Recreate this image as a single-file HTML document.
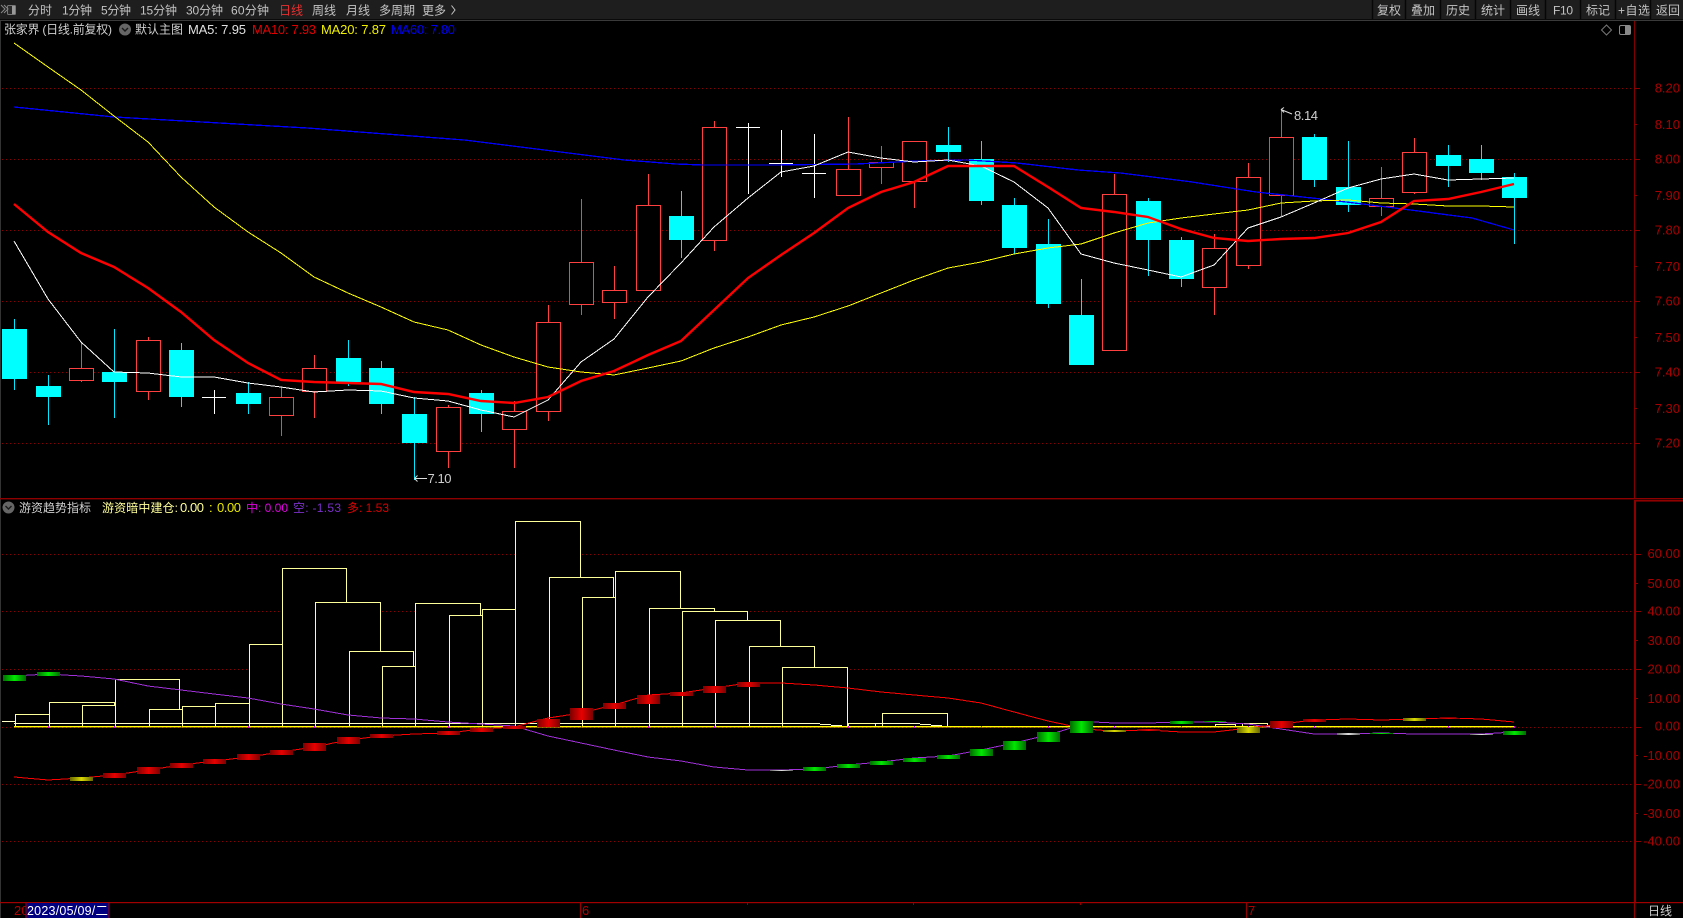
<!DOCTYPE html>
<html lang="zh">
<head>
<meta charset="utf-8">
<title>张家界</title>
<style>
html,body{margin:0;padding:0;background:#000;width:1683px;height:918px;overflow:hidden}
svg{display:block}
text{font-family:"Liberation Sans","Noto Sans CJK SC",sans-serif;white-space:pre}
.tb{font-size:12px;fill:#c4c4c4}
.ax{font-size:13px;fill:#a80000;text-anchor:end}
</style>
</head>
<body>
<svg width="1683" height="918" viewBox="0 0 1683 918" xmlns="http://www.w3.org/2000/svg">
<defs>
<linearGradient id="g"><stop offset="0" stop-color="#006c00"/><stop offset=".5" stop-color="#00e800"/><stop offset="1" stop-color="#006c00"/></linearGradient>
<linearGradient id="r"><stop offset="0" stop-color="#7c0000"/><stop offset=".5" stop-color="#e80000"/><stop offset="1" stop-color="#7c0000"/></linearGradient>
<linearGradient id="y"><stop offset="0" stop-color="#666600"/><stop offset=".5" stop-color="#d8d800"/><stop offset="1" stop-color="#666600"/></linearGradient>
<linearGradient id="w"><stop offset="0" stop-color="#666"/><stop offset=".5" stop-color="#e0e0e0"/><stop offset="1" stop-color="#666"/></linearGradient>
</defs>
<rect width="1683" height="918" fill="#000"/>

<!-- toolbar -->
<rect width="1683" height="19" fill="#1e1e1f"/>
<rect y="19" width="1683" height="1" fill="#0a0a0a"/>
<rect y="20" width="1683" height="1" fill="#3a3a3a"/>
<path d="M1372.5 0V19M1405.5 0V19M1440.5 0V19M1475.5 0V19M1510.5 0V19M1545.5 0V19M1580.5 0V19M1615.5 0V19M1650.5 0V19" stroke="#060606" stroke-width="1.5" fill="none"/>
<rect x="7.5" y="5.5" width="8" height="9" rx="1" fill="#2a2a2a" stroke="#777"/>
<rect x="12" y="6" width="3" height="8" fill="#999"/>
<path d="M1 5l4 4-4 4M4 5l4 4-4 4" stroke="#888" fill="none"/>
<text class="tb" x="28" y="14.5" textLength="24">分时</text>
<text class="tb" x="62" y="14.5" textLength="30">1分钟</text>
<text class="tb" x="101" y="14.5" textLength="30">5分钟</text>
<text class="tb" x="140" y="14.5" textLength="37">15分钟</text>
<text class="tb" x="186" y="14.5" textLength="37">30分钟</text>
<text class="tb" x="231" y="14.5" textLength="38">60分钟</text>
<text class="tb" x="279" y="14.5" style="fill:#e83030" textLength="24">日线</text>
<text class="tb" x="312" y="14.5" textLength="24">周线</text>
<text class="tb" x="346" y="14.5" textLength="24">月线</text>
<text class="tb" x="379" y="14.5" textLength="36">多周期</text>
<text class="tb" x="422" y="14.5" textLength="24">更多</text>
<path d="M451.5 5.5l3.5 4.5-3.5 4.5" stroke="#c4c4c4" fill="none"/>
<text class="tb" x="1377" y="14.5" textLength="24">复权</text>
<text class="tb" x="1411" y="14.5" textLength="24">叠加</text>
<text class="tb" x="1446" y="14.5" textLength="24">历史</text>
<text class="tb" x="1481" y="14.5" textLength="24">统计</text>
<text class="tb" x="1516" y="14.5" textLength="24">画线</text>
<text class="tb" x="1553" y="14.5" textLength="20">F10</text>
<text class="tb" x="1586" y="14.5" textLength="24">标记</text>
<text class="tb" x="1618" y="14.5" textLength="32">+自选</text>
<text class="tb" x="1656" y="14.5" textLength="24">返回</text>

<rect y="21" width="1" height="897" fill="#333"/>

<!-- grids -->
<path d="M2 88.5H1631M2 159.5H1631M2 230.5H1631M2 301.5H1631M2 372.5H1631M2 443.5H1631M2 554.5H1631M2 611.5H1631M2 669.5H1631M2 727.5H1631M2 784.5H1631M2 841.5H1631" stroke="#8a0000" stroke-dasharray="1 3" fill="none"/>

<!-- axes -->
<path d="M1634.5 21V499" stroke="#800000" fill="none"/>
<rect y="498" width="1683" height="1.4" fill="#8e0000"/>
<rect x="1634" y="500" width="49" height="1.6" fill="#8e0000"/>
<rect x="1634" y="500" width="2" height="402" fill="#8e0000"/>
<rect y="902" width="1683" height="1.2" fill="#a00000"/>
<path d="M1634 88.5h6M1634 159.5h6M1634 230.5h6M1634 301.5h6M1634 372.5h6M1634 443.5h6M1634 124.5h3M1634 195.5h3M1634 266.5h3M1634 337.5h3M1634 408.5h3M1636 554.5h5M1636 611.5h5M1636 669.5h5M1636 727.5h5M1636 784.5h5M1636 841.5h5M1636 583.5h2M1636 640.5h2M1636 698.5h2M1636 755.5h2M1636 813.5h2" stroke="#8e0000" fill="none"/>
<text class="ax" x="1680" y="92.5">8.20</text>
<text class="ax" x="1680" y="129">8.10</text>
<text class="ax" x="1680" y="163.5">8.00</text>
<text class="ax" x="1680" y="200">7.90</text>
<text class="ax" x="1680" y="234.5">7.80</text>
<text class="ax" x="1680" y="271">7.70</text>
<text class="ax" x="1680" y="305.5">7.60</text>
<text class="ax" x="1680" y="342">7.50</text>
<text class="ax" x="1680" y="376.5">7.40</text>
<text class="ax" x="1680" y="413">7.30</text>
<text class="ax" x="1680" y="447.5">7.20</text>
<text class="ax" x="1680" y="558">60.00</text>
<text class="ax" x="1680" y="588">50.00</text>
<text class="ax" x="1680" y="615.5">40.00</text>
<text class="ax" x="1680" y="645">30.00</text>
<text class="ax" x="1680" y="673.5">20.00</text>
<text class="ax" x="1680" y="703">10.00</text>
<text class="ax" x="1680" y="730.5">0.00</text>
<text class="ax" x="1680" y="760">-10.00</text>
<text class="ax" x="1680" y="788.5">-20.00</text>
<text class="ax" x="1680" y="818">-30.00</text>
<text class="ax" x="1680" y="845.5">-40.00</text>

<!-- red wicks -->
<path shape-rendering="crispEdges" stroke="#ff4040" fill="none" d="M81.5 342V382M148.5 337V400M281.5 387V436M314.5 355V418M448.5 405V468M514.5 401V468M548.5 305V421M581.5 199V315M614.5 266V319M648.5 174V290M714.5 121V251M848.5 117V195M881.5 146V184M914.5 141V208M1114.5 174V350M1214.5 234V315M1248.5 163V269M1281.5 109V216M1381.5 167V216M1414.5 138V194"/>
<!-- red bodies -->
<path shape-rendering="crispEdges" stroke="#ff4040" fill="#000" d="M69.5 368.5h24v12h-24zM136.5 340.5h24v51h-24zM269.5 397.5h24v18h-24zM302.5 368.5h24v23h-24zM436.5 407.5h24v44h-24zM502.5 411.5h24v18h-24zM536.5 322.5h24v89h-24zM569.5 262.5h24v42h-24zM602.5 290.5h24v12h-24zM636.5 205.5h24v85h-24zM702.5 127.5h24v113h-24zM836.5 169.5h24v26h-24zM869.5 162.5h24v5h-24zM902.5 141.5h24v40h-24zM1102.5 194.5h24v156h-24zM1202.5 248.5h24v39h-24zM1236.5 177.5h24v88h-24zM1269.5 137.5h24v58h-24zM1369.5 198.5h24v8h-24zM1402.5 152.5h24v40h-24z"/>
<!-- cyan wicks -->
<path shape-rendering="crispEdges" stroke="#00e8ff" fill="none" d="M14.5 319V390M48.5 375V425M114.5 329V418M181.5 343V407M248.5 382V414M348.5 340V386M381.5 361V414M414.5 397V480M481.5 390V432M681.5 191V258M948.5 127V162M981.5 141V205M1014.5 198V254M1048.5 219V308M1081.5 279V315M1148.5 198V276M1181.5 237V287M1314.5 134V187M1348.5 141V212M1448.5 145V187M1481.5 145V180M1514.5 173V244"/>
<!-- cyan bodies -->
<path fill="#00ffff" d="M2 329h25v50h-25zM36 386h25v11h-25zM102 372h25v10h-25zM169 350h25v47h-25zM236 393h25v11h-25zM336 358h25v24h-25zM369 368h25v36h-25zM402 414h25v29h-25zM469 393h25v21h-25zM669 216h25v24h-25zM936 145h25v7h-25zM969 159h25v42h-25zM1002 205h25v43h-25zM1036 244h25v60h-25zM1069 315h25v50h-25zM1136 201h25v39h-25zM1169 240h25v39h-25zM1302 137h25v43h-25zM1336 187h25v18h-25zM1436 155h25v11h-25zM1469 159h25v14h-25zM1502 177h25v21h-25z"/>
<!-- doji -->
<path shape-rendering="crispEdges" stroke="#fff" fill="none" d="M214.5 390V414M202 397.5h24M748.5 123V194M736 127.5h24M781.5 130V177M769 163.5h24M814.5 134V198M802 173.5h24"/>

<!-- MA lines -->
<polyline shape-rendering="crispEdges" fill="none" stroke="#0000ff" stroke-width="1.3" points="14,107 114,117 307,128 464,140 560,152 624,160 676,164 703,165 774,165 856,164 917,161 967,160 1017,163 1078,170 1120,173 1192,182 1256,192 1321,199 1371,205 1418,211 1472,218 1514,230"/>
<polyline shape-rendering="crispEdges" fill="none" stroke="#ffff00" points="14,43 48,67 81,90 114,116 148,142 181,177 214,207 248,232 281,253 314,277 348,293 381,307 414,322 448,330 481,345 514,357 548,367 581,372 614,375 648,368 681,361 714,348 748,337 781,325 814,317 848,306 881,293 914,280 948,268 981,262 1014,254 1048,248 1081,244 1114,233 1148,223 1181,218 1214,214 1248,210 1281,203 1314,201 1348,200 1381,203 1414,204 1448,206 1481,206 1514,207"/>
<polyline shape-rendering="crispEdges" fill="none" stroke="#ffffff" points="14,241 48,299 81,342 114,372 148,373 181,377 214,377 248,383 281,387 314,392 348,390 381,391 414,398 448,401 481,410 514,417 548,400 581,362 614,339 648,297 681,263 714,227 748,198 781,172 814,166 848,152 881,158 914,162 948,160 981,166 1014,182 1048,208 1081,254 1114,263 1148,270 1181,277 1214,265 1248,228 1281,217 1314,203 1348,188 1381,179 1414,174 1448,180 1481,179 1514,178"/>
<polyline fill="none" stroke="#ff0000" stroke-width="2.4" points="14,204 48,232 81,253 114,267 148,288 181,312 214,340 248,363 281,380 314,382 348,383 381,384 414,392 448,394 481,401 514,403 548,397 581,381 614,371 648,355 681,341 714,310 748,278 781,255 814,233 848,208 881,192 914,182 948,166 981,166 1014,166 1048,187 1081,208 1114,212 1148,217 1181,229 1214,238 1248,241 1281,239 1314,238 1348,233 1381,222 1414,201 1448,199 1481,192 1514,184"/>

<!-- price annotations -->
<path d="M1281 109.5l11 4.5M1281 109.5l3-2M1281 109.5l3 3" stroke="#ddd" fill="none"/>
<text x="1294" y="120" font-size="13" fill="#cfcfcf" textLength="24">8.14</text>
<path d="M414.5 478.5H427M414.5 478.5l3-3M414.5 478.5l3 3" stroke="#ddd" fill="none"/>
<text x="427.5" y="483" font-size="13" fill="#cfcfcf" textLength="24">7.10</text>

<!-- title row -->
<text x="4" y="33.5" font-size="12" fill="#cfcfcf" textLength="108">张家界 (日线.前复权)</text>
<circle cx="125" cy="29.5" r="6" fill="#666"/>
<path d="M122 28l3 3 3-3" stroke="#1a1a1a" stroke-width="1.4" fill="none"/>
<text x="135" y="33.5" font-size="12" fill="#cfcfcf" textLength="48">默认主图</text>
<text x="188" y="34" font-size="13" fill="#e0e0e0" textLength="58">MA5: 7.95</text>
<text x="252" y="34" font-size="13" fill="#e00000" textLength="64">MA10: 7.93</text>
<text x="321" y="34" font-size="13" fill="#f0f000" textLength="65">MA20: 7.87</text>
<text x="391" y="34" font-size="13" fill="#0000f0" textLength="64">MA60: 7.80</text>
<path d="M1606.5 25l5 5-5 5-5-5z" stroke="#777" fill="none"/>
<rect x="1619.5" y="25.5" width="11" height="9" rx="1.5" stroke="#888" fill="none"/>
<rect x="1625" y="26" width="5" height="8" fill="#888"/>

<!-- sub title -->
<circle cx="8.5" cy="507.5" r="6" fill="#666"/>
<path d="M5.5 506l3 3 3-3" stroke="#1a1a1a" stroke-width="1.4" fill="none"/>
<text x="19" y="512" font-size="12" fill="#cfcfcf" textLength="72">游资趋势指标</text>
<text x="102" y="512" font-size="12" fill="#ffff99" textLength="76">游资暗中建仓:</text>
<text x="180" y="512" font-size="13" fill="#ffff99" textLength="24">0.00</text>
<text x="209" y="512" font-size="13" fill="#ffff00">:</text>
<text x="217" y="512" font-size="13" fill="#e8e800" textLength="24">0.00</text>
<text x="246" y="512" font-size="12" fill="#e000e0" textLength="42">中: 0.00</text>
<text x="293" y="512" font-size="12" fill="#7a30c8" textLength="48">空: -1.53</text>
<text x="347" y="512" font-size="12" fill="#d80000" textLength="42">多: 1.53</text>

<!-- sub-chart boxes -->
<g shape-rendering="crispEdges" fill="#000" stroke="#ffff99">
<rect x="15.5" y="714.5" width="34" height="12"/>
<rect x="49.5" y="702.5" width="65" height="24"/>
<rect x="82.5" y="705.5" width="33" height="21"/>
<rect x="115.5" y="679.5" width="64" height="47"/>
<rect x="149.5" y="709.5" width="33" height="17"/>
<rect x="182.5" y="706.5" width="33" height="20"/>
<rect x="215.5" y="703.5" width="34" height="23"/>
<rect x="249.5" y="644.5" width="33" height="82"/>
<rect x="282.5" y="568.5" width="64" height="158"/>
<rect x="315.5" y="602.5" width="65" height="124"/>
<rect x="349.5" y="651.5" width="64" height="75"/>
<rect x="382.5" y="666.5" width="33" height="60"/>
<rect x="415.5" y="603.5" width="65" height="123"/>
<rect x="449.5" y="615.5" width="33" height="111"/>
<rect x="482.5" y="609.5" width="33" height="117"/>
<rect x="515.5" y="521.5" width="65" height="205"/>
<rect x="549.5" y="577.5" width="64" height="149"/>
<rect x="582.5" y="597.5" width="33" height="129"/>
<rect x="615.5" y="571.5" width="65" height="155"/>
<rect x="649.5" y="608.5" width="65" height="118"/>
<rect x="682.5" y="611.5" width="65" height="115"/>
<rect x="715.5" y="620.5" width="65" height="106"/>
<rect x="749.5" y="646.5" width="65" height="80"/>
<rect x="782.5" y="667.5" width="65" height="59"/>
<rect x="848.5" y="723.5" width="27" height="3"/>
<rect x="882.5" y="713.5" width="65" height="13"/>
<rect x="1215.5" y="724.5" width="20" height="2"/>
<rect x="1242.5" y="723.5" width="25" height="3"/>
</g>
<path shape-rendering="crispEdges" stroke="#ffffc8" fill="none" d="M2 721.5H15M14 723.5H820M820 724.5H831M831 725.5H842M874 723.5H920M920 724.5H931M931 725.5H942"/>
<rect x="14" y="726" width="1500" height="1.4" fill="#ffff00"/>
<path shape-rendering="crispEdges" stroke="#d000d0" fill="none" d="M48.5 726v2M114.5 726v2M181.5 726v2M248.5 726v2M314.5 726v2M381.5 726v2M448.5 726v2M514.5 726v2M581.5 726v2M648.5 726v2M714.5 726v2M781.5 726v2M848.5 726v2M914.5 726v2M981.5 726v2M1048.5 726v2M1114.5 726v2M1181.5 726v2M1248.5 726v2M1314.5 726v2M1381.5 726v2M1448.5 726v2M1514.5 726v2"/>

<!-- purple line -->
<polyline shape-rendering="crispEdges" fill="none" stroke="#a030d8" points="14,676 48,674 81,676 114,679 148,686 181,690 214,694 248,698 281,704 314,709 348,715 381,718 414,719 448,722 481,724 514,726 548,736 581,743 614,750 648,757 681,761 714,767 748,770 781,770 814,769 848,765 881,762 914,758 948,756 981,750 1014,743 1048,735 1081,725 1094,722 1114,723 1148,723 1181,722 1214,722 1248,724 1281,729 1314,734 1348,734 1381,733 1414,734 1448,734 1481,734 1514,732"/>
<!-- red line -->
<polyline shape-rendering="crispEdges" fill="none" stroke="#ff0000" points="14,777 48,780 81,778 114,775 148,770 181,765 214,761 248,757 281,752 314,747 348,740 381,736 414,734 448,733 481,729 514,727 548,718 581,713 614,705 648,695 681,693 714,688 748,683 781,683 814,685 848,688 881,692 914,695 948,698 981,703 1014,712 1048,721 1081,728 1097,730 1114,731 1148,730 1181,732 1214,732 1248,728 1281,724 1314,720 1348,719 1381,720 1414,719 1448,718 1481,719 1514,722"/>

<!-- gradient blocks -->
<g shape-rendering="crispEdges">
<rect x="3" y="675" width="23" height="6" fill="url(#g)"/>
<rect x="37" y="672" width="23" height="4" fill="url(#g)"/>
<rect x="70" y="777" width="23" height="4" fill="url(#y)"/>
<rect x="103" y="773" width="23" height="5" fill="url(#r)"/>
<rect x="137" y="767" width="23" height="7" fill="url(#r)"/>
<rect x="170" y="763" width="23" height="5" fill="url(#r)"/>
<rect x="203" y="759" width="23" height="5" fill="url(#r)"/>
<rect x="237" y="754" width="23" height="6" fill="url(#r)"/>
<rect x="270" y="750" width="23" height="5" fill="url(#r)"/>
<rect x="303" y="743" width="23" height="8" fill="url(#r)"/>
<rect x="337" y="737" width="23" height="7" fill="url(#r)"/>
<rect x="370" y="734" width="23" height="4" fill="url(#r)"/>
<rect x="437" y="731" width="23" height="4" fill="url(#r)"/>
<rect x="470" y="728" width="23" height="4" fill="url(#r)"/>
<rect x="503" y="726" width="23" height="3" fill="url(#r)"/>
<rect x="537" y="719" width="23" height="8" fill="url(#r)"/>
<rect x="570" y="708" width="23" height="12" fill="url(#r)"/>
<rect x="603" y="703" width="23" height="6" fill="url(#r)"/>
<rect x="637" y="695" width="23" height="9" fill="url(#r)"/>
<rect x="670" y="692" width="23" height="4" fill="url(#r)"/>
<rect x="703" y="686" width="23" height="7" fill="url(#r)"/>
<rect x="737" y="682" width="23" height="5" fill="url(#r)"/>
<rect x="770" y="770" width="23" height="1" fill="url(#w)"/>
<rect x="803" y="767" width="23" height="4" fill="url(#g)"/>
<rect x="837" y="764" width="23" height="4" fill="url(#g)"/>
<rect x="870" y="761" width="23" height="4" fill="url(#g)"/>
<rect x="903" y="758" width="23" height="4" fill="url(#g)"/>
<rect x="937" y="755" width="23" height="4" fill="url(#g)"/>
<rect x="970" y="749" width="23" height="7" fill="url(#g)"/>
<rect x="1003" y="741" width="23" height="9" fill="url(#g)"/>
<rect x="1037" y="732" width="23" height="10" fill="url(#g)"/>
<rect x="1070" y="721" width="23" height="12" fill="url(#g)"/>
<rect x="1103" y="730" width="23" height="2" fill="url(#y)"/>
<rect x="1137" y="729" width="23" height="2" fill="url(#r)"/>
<rect x="1170" y="721" width="23" height="3" fill="url(#g)"/>
<rect x="1203" y="721" width="23" height="1" fill="url(#g)"/>
<rect x="1237" y="727" width="23" height="6" fill="url(#y)"/>
<rect x="1270" y="721" width="23" height="7" fill="url(#r)"/>
<rect x="1303" y="719" width="23" height="3" fill="url(#r)"/>
<rect x="1337" y="733" width="23" height="2" fill="url(#w)"/>
<rect x="1370" y="733" width="23" height="1" fill="url(#g)"/>
<rect x="1403" y="718" width="23" height="3" fill="url(#y)"/>
<rect x="1437" y="718" width="23" height="1" fill="url(#r)"/>
<rect x="1470" y="734" width="23" height="1" fill="url(#w)"/>
<rect x="1503" y="731" width="23" height="4" fill="url(#g)"/>
</g>

<!-- bottom bar -->
<text x="14" y="915" font-size="13" fill="#b00000">20</text>
<rect x="26" y="903" width="83" height="15" fill="#000080"/>
<path d="M26 903V918M109 903V918" stroke="#a00000" fill="none"/>
<text x="27" y="915" font-size="12.5" fill="#fff" textLength="81">2023/05/09/二</text>
<path d="M580.5 903V918M1246.5 903V918M1634.5 903V918M747.5 903v2M913.5 903v2M1080.5 903v2" stroke="#900000" fill="none"/>
<text x="582" y="915" font-size="13" fill="#b00000">6</text>
<text x="1248" y="915" font-size="13" fill="#b00000">7</text>
<text x="1648" y="915" font-size="12" fill="#cfcfcf" textLength="24">日线</text>
</svg>
</body>
</html>
